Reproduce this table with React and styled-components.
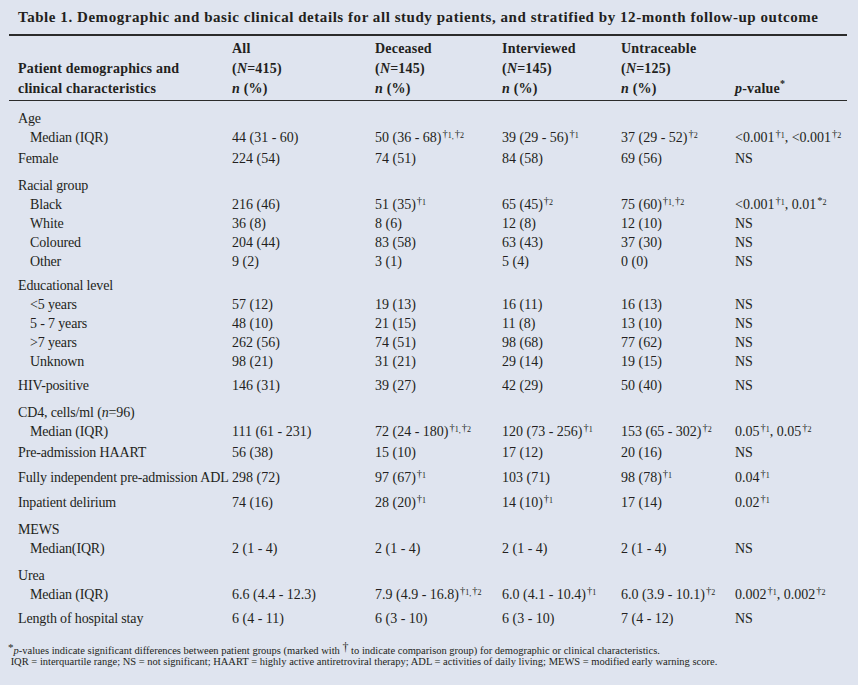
import React from 'react'
import styled, { createGlobalStyle } from 'styled-components'

const GlobalStyle = createGlobalStyle`
  body {
    margin: 0;
    background: #dfe4ef;
  }
`

const COLS = '223px 143px 127px 119px 114px 1fr'

// one mark: dagger / star with a tiny lowered index
function Mark({ n, star }) {
  return (
    <Sup>
      {star ? '*' : '†'}
      <Idx>{n}</Idx>
    </Sup>
  )
}

function Marks({ list }) {
  return (
    <>
      {list.map((n, i) => (
        <React.Fragment key={i}>
          {i > 0 && <Sep>,</Sep>}
          <Mark n={n} />
        </React.Fragment>
      ))}
    </>
  )
}

const rows = [
  { label: 'Age', gap: 0 },
  { label: 'Median (IQR)', sub: true, cells: ['44 (31 - 60)', ['50 (36 - 68)', [1, 2]], ['39 (29 - 56)', [1]], ['37 (29 - 52)', [2]], 'age-p'] },
  { label: 'Female', gap: 2, cells: ['224 (54)', '74 (51)', '84 (58)', '69 (56)', 'NS'] },
  { label: 'Racial group', gap: 8 },
  { label: 'Black', sub: true, cells: ['216 (46)', ['51 (35)', [1]], ['65 (45)', [2]], ['75 (60)', [1, 2]], 'race-p'] },
  { label: 'White', sub: true, cells: ['36 (8)', '8 (6)', '12 (8)', '12 (10)', 'NS'] },
  { label: 'Coloured', sub: true, cells: ['204 (44)', '83 (58)', '63 (43)', '37 (30)', 'NS'] },
  { label: 'Other', sub: true, cells: ['9 (2)', '3 (1)', '5 (4)', '0 (0)', 'NS'] },
  { label: 'Educational level', gap: 5 },
  { label: '<5 years', sub: true, cells: ['57 (12)', '19 (13)', '16 (11)', '16 (13)', 'NS'] },
  { label: '5 - 7 years', sub: true, cells: ['48 (10)', '21 (15)', '11 (8)', '13 (10)', 'NS'] },
  { label: '>7 years', sub: true, cells: ['262 (56)', '74 (51)', '98 (68)', '77 (62)', 'NS'] },
  { label: 'Unknown', sub: true, cells: ['98 (21)', '31 (21)', '29 (14)', '19 (15)', 'NS'] },
  { label: 'HIV-positive', gap: 5, cells: ['146 (31)', '39 (27)', '42 (29)', '50 (40)', 'NS'] },
  { label: 'cd4', gap: 8 },
  { label: 'Median (IQR)', sub: true, cells: ['111 (61 - 231)', ['72 (24 - 180)', [1, 2]], ['120 (73 - 256)', [1]], ['153 (65 - 302)', [2]], 'cd4-p'] },
  { label: 'Pre-admission HAART', gap: 2, cells: ['56 (38)', '15 (10)', '17 (12)', '20 (16)', 'NS'] },
  { label: 'Fully independent pre-admission ADL', gap: 6, cells: ['298 (72)', ['97 (67)', [1]], '103 (71)', ['98 (78)', [1]], ['0.04', [1]]] },
  { label: 'Inpatient delirium', gap: 6, cells: ['74 (16)', ['28 (20)', [1]], ['14 (10)', [1]], '17 (14)', ['0.02', [1]]] },
  { label: 'MEWS', gap: 8 },
  { label: 'Median(IQR)', sub: true, cells: ['2 (1 - 4)', '2 (1 - 4)', '2 (1 - 4)', '2 (1 - 4)', 'NS'] },
  { label: 'Urea', gap: 8 },
  { label: 'Median (IQR)', sub: true, cells: ['6.6 (4.4 - 12.3)', ['7.9 (4.9 - 16.8)', [1, 2]], ['6.0 (4.1 - 10.4)', [1]], ['6.0 (3.9 - 10.1)', [2]], 'urea-p'] },
  { label: 'Length of hospital stay', gap: 5, cells: ['6 (4 - 11)', '6 (3 - 10)', '6 (3 - 10)', '7 (4 - 12)', 'NS'] },
]

function renderCell(c) {
  if (c === 'age-p') return <>&lt;0.001<Mark n={1} />, &lt;0.001<Mark n={2} /></>
  if (c === 'race-p') return <>&lt;0.001<Mark n={1} />, 0.01<Mark n={2} star /></>
  if (c === 'cd4-p') return <>0.05<Mark n={1} />, 0.05<Mark n={2} /></>
  if (c === 'urea-p') return <>0.002<Mark n={1} />, 0.002<Mark n={2} /></>
  if (Array.isArray(c)) return <>{c[0]}<Marks list={c[1]} /></>
  return c
}

function renderLabel(l) {
  if (l === 'cd4') return <>CD4, cells/ml (<i>n</i>=96)</>
  return l
}

export default function App() {
  return (
    <Page>
      <GlobalStyle />
      <Title>Table 1. Demographic and basic clinical details for all study patients, and stratified by 12-month follow-up outcome</Title>

      <Head>
        <HeadRow>
          <HeadCell />
          <HeadCell>All</HeadCell>
          <HeadCell>Deceased</HeadCell>
          <HeadCell>Interviewed</HeadCell>
          <HeadCell>Untraceable</HeadCell>
          <HeadCell />
        </HeadRow>
        <HeadRow>
          <HeadCell $label>Patient demographics and</HeadCell>
          <HeadCell>(<i>N</i>=415)</HeadCell>
          <HeadCell>(<i>N</i>=145)</HeadCell>
          <HeadCell>(<i>N</i>=145)</HeadCell>
          <HeadCell>(<i>N</i>=125)</HeadCell>
          <HeadCell />
        </HeadRow>
        <HeadRow>
          <HeadCell $label>clinical characteristics</HeadCell>
          <HeadCell><i>n</i> (%)</HeadCell>
          <HeadCell><i>n</i> (%)</HeadCell>
          <HeadCell><i>n</i> (%)</HeadCell>
          <HeadCell><i>n</i> (%)</HeadCell>
          <HeadCell><i>p</i>-value<Star>*</Star></HeadCell>
        </HeadRow>
      </Head>

      <Body>
        {rows.map((r, i) => (
          <Row key={i} $gap={r.gap || 0}>
            <Label $sub={r.sub}>{renderLabel(r.label)}</Label>
            {(r.cells || ['', '', '', '', '']).map((c, j) => (
              <Cell key={j}>{renderCell(c)}</Cell>
            ))}
          </Row>
        ))}
      </Body>

      <Notes>
        <Note><NoteStar>*</NoteStar><i>p</i>-values indicate significant differences between patient groups (marked with <NoteDagger>†</NoteDagger> to indicate comparison group) for demographic or clinical characteristics.</Note>
        <Note>&nbsp;IQR = interquartile range; NS = not significant; HAART = highly active antiretroviral therapy; ADL = activities of daily living; MEWS = modified early warning score.</Note>
      </Notes>
    </Page>
  )
}

const Page = styled.div`
  width: 858px;
  height: 685px;
  box-sizing: border-box;
  padding: 0 11px 0 9px;
  background: #dfe4ef;
  color: #231f20;
  font-family: 'Liberation Serif', 'Times New Roman', serif;
  overflow: hidden;
`

const Title = styled.div`
  padding: 7px 0 7px 9px;
  line-height: 20px;
  font-size: 15px;
  letter-spacing: 0.55px;
  font-weight: bold;
  border-bottom: 2px solid #2b2b2b;
  white-space: nowrap;
`

const Head = styled.div`
  padding: 3px 0 1px;
  border-bottom: 1px solid #2b2b2b;
`

const HeadRow = styled.div`
  display: grid;
  grid-template-columns: ${COLS};
  line-height: 20px;
  font-size: 14px;
  letter-spacing: 0.2px;
  font-weight: bold;
`

const HeadCell = styled.div`
  padding-left: ${p => (p.$label ? '9px' : '0')};
  white-space: nowrap;
`

const Star = styled.sup`
  font-size: 10px;
  line-height: 0;
`

const Body = styled.div`
  padding-top: 8px;
`

const Row = styled.div`
  display: grid;
  grid-template-columns: ${COLS};
  margin-top: ${p => p.$gap}px;
  line-height: 19px;
  height: 19px;
  font-size: 14px;
`

const Label = styled.div`
  padding-left: ${p => (p.$sub ? '21px' : '9px')};
  letter-spacing: -0.15px;
  white-space: nowrap;
`

const Cell = styled.div`
  white-space: nowrap;
`

const Sup = styled.span`
  position: relative;
  top: -5px;
  font-size: 10.5px;
  line-height: 0;
  margin-left: 1px;
`

const Idx = styled.span`
  position: relative;
  top: 1px;
  font-size: 8px;
`

const Sep = styled.span`
  position: relative;
  top: -3px;
  font-size: 8px;
`

const Notes = styled.div`
  margin-top: 17px;
  margin-left: -1px;
  font-size: 10.5px;
  line-height: 11px;
`

const Note = styled.div`
  white-space: nowrap;
`

const NoteStar = styled.span`
  position: relative;
  top: -3px;
  font-size: 11px;
  line-height: 0;
`

const NoteDagger = styled.span`
  position: relative;
  top: -3px;
  font-size: 12px;
  line-height: 0;
`
